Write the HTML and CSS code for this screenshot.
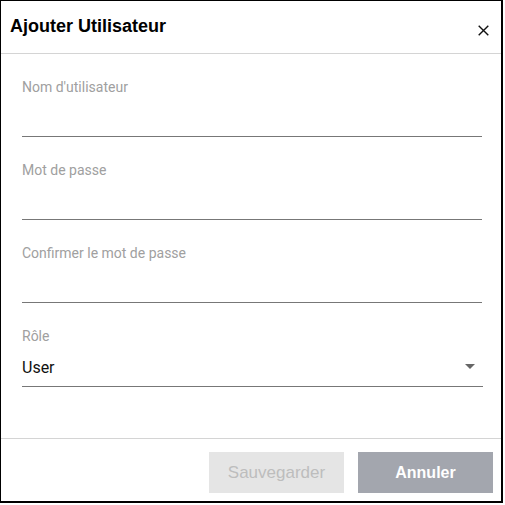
FILE: index.html
```html
<!DOCTYPE html>
<html lang="fr">
<head>
<meta charset="utf-8">
<title>Ajouter Utilisateur</title>
<link rel="stylesheet" href="styles.css">
</head>
<body>
<div class="dialog">
  <div class="header">
    <h1 class="title">Ajouter Utilisateur</h1>
    <button class="close" aria-label="Fermer">
      <svg width="11" height="11" viewBox="0 0 11 11"><path d="M0.7 0.7 L10.3 10.3 M10.3 0.7 L0.7 10.3" stroke="#111" stroke-width="1.4" fill="none"/></svg>
    </button>
  </div>
  <div class="body">
    <div class="field">
      <div class="label">Nom d'utilisateur</div>
      <div class="input"></div>
    </div>
    <div class="field">
      <div class="label">Mot de passe</div>
      <div class="input"></div>
    </div>
    <div class="field">
      <div class="label">Confirmer le mot de passe</div>
      <div class="input"></div>
    </div>
    <div class="field field-select">
      <div class="label">Rôle</div>
      <div class="select">
        <span class="value">User</span>
        <span class="caret"></span>
      </div>
    </div>
  </div>
  <div class="footer">
    <button class="btn btn-save">Sauvegarder</button>
    <button class="btn btn-cancel">Annuler</button>
  </div>
</div>
</body>
</html>
```
FILE: styles.css
```css
html, body {
  margin: 0;
  padding: 0;
  background: #fff;
}
.dialog {
  box-sizing: border-box;
  width: 503px;
  height: 503px;
  border-style: solid;
  border-color: #000;
  border-width: 1px 2px 2px 1px;
  display: flex;
  flex-direction: column;
  background: #fff;
  font-family: Roboto, "Liberation Sans", sans-serif;
}
.header {
  box-sizing: border-box;
  height: 53px;
  border-bottom: 1px solid #d4d4d4;
  display: flex;
  align-items: flex-start;
  justify-content: space-between;
  padding: 15px 0 0 9px;
}
.title {
  margin: 0;
  font-family: "Liberation Sans", Arial, sans-serif;
  font-weight: bold;
  font-size: 18px;
  line-height: 21px;
  color: #000;
}
.close {
  border: 0;
  background: none;
  padding: 0;
  margin: 9px 12px 0 0;
  width: 11px;
  height: 11px;
  display: flex;
}
.body {
  flex: 1;
  padding: 25px 19px 0 21px;
  display: flex;
  flex-direction: column;
  gap: 25px;
}
.label {
  font-size: 14px;
  line-height: 16px;
  color: #a0a0a0;
}
.input {
  height: 41px;
  border-bottom: 1px solid #777;
}
.field-select {
  margin-right: -1px;
}
.select {
  height: 43px;
  box-sizing: border-box;
  padding-top: 14px;
  border-bottom: 1px solid #777;
  display: flex;
  justify-content: space-between;
  align-items: flex-start;
}
.value {
  font-size: 16px;
  line-height: 20px;
  color: #111;
}
.caret {
  width: 0;
  height: 0;
  margin: 6px 8px 0 0;
  border-left: 5px solid transparent;
  border-right: 5px solid transparent;
  border-top: 5px solid #666;
}
.footer {
  border-top: 1px solid #d4d4d4;
  padding: 13px 8px 8px 0;
  display: flex;
  justify-content: flex-end;
  gap: 14px;
}
.btn {
  width: 135px;
  height: 41px;
  border: 0;
  padding: 0;
  font-family: "Liberation Sans", Arial, sans-serif;
  font-size: 17px;
}
.btn-save {
  background: #e5e5e5;
  color: #bdbdbd;
}
.btn-cancel {
  background: #a3a6ae;
  color: #fff;
  font-weight: bold;
  font-size: 16px;
}
```
